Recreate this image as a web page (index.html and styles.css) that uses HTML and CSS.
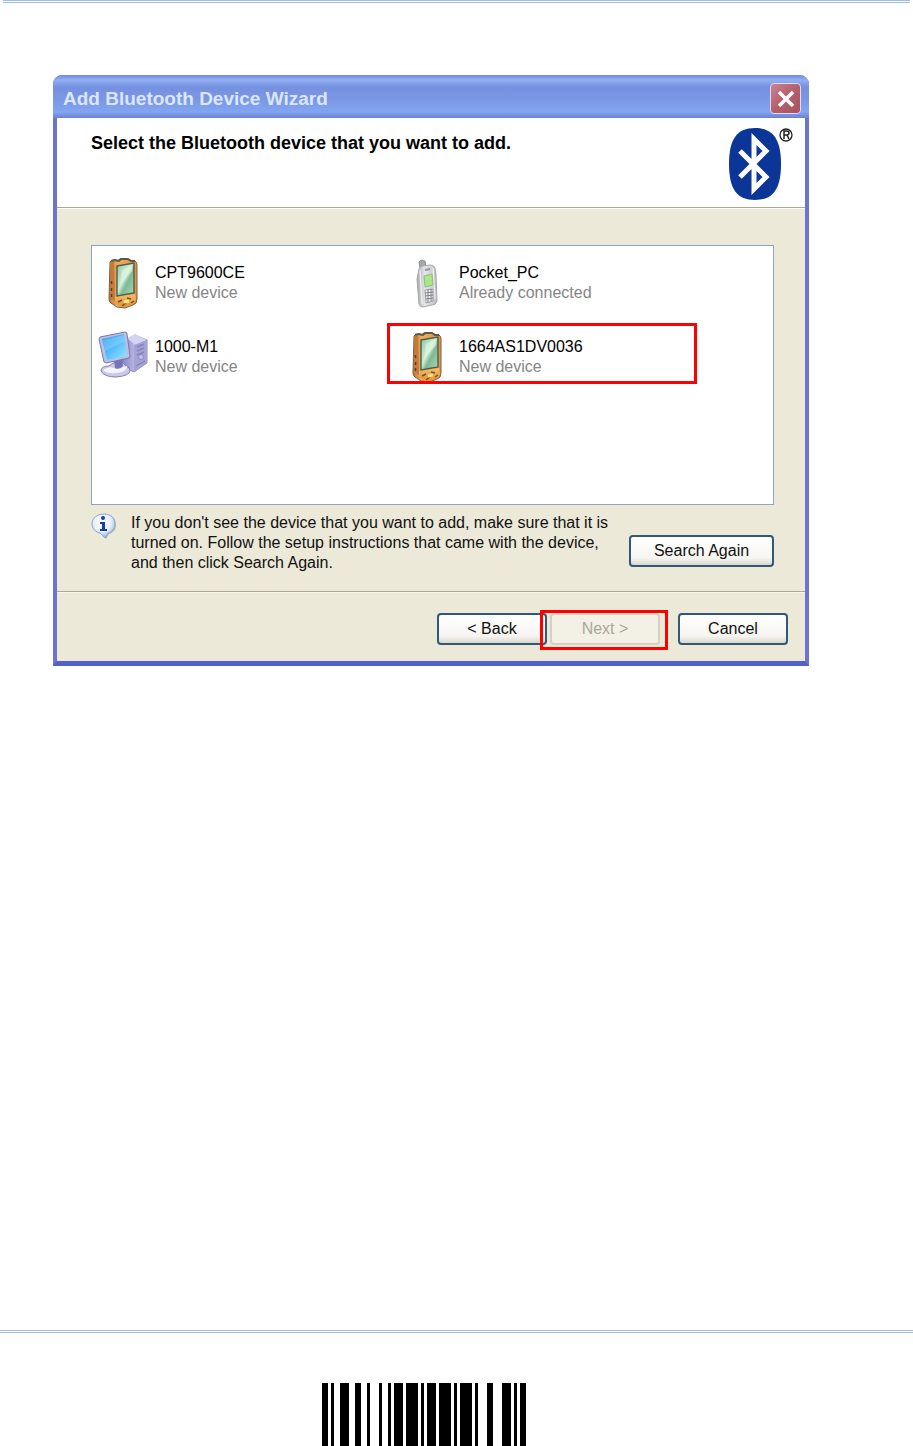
FILE: index.html
```html
<!DOCTYPE html>
<html lang="en">
<head>
<meta charset="utf-8">
<title>Add Bluetooth Device Wizard</title>
<link rel="stylesheet" href="styles.css">
</head>
<body>
<svg width="0" height="0" class="defs" aria-hidden="true">
  <defs>
    <linearGradient id="orange" x1="0" y1="0" x2="1" y2="0"><stop offset="0" stop-color="#bb7238"/><stop offset=".3" stop-color="#f0ac5c"/><stop offset="1" stop-color="#dc9248"/></linearGradient>
    <linearGradient id="orangeBase" x1="0" y1="0" x2="0" y2="1"><stop offset="0" stop-color="#f7bd68"/><stop offset="1" stop-color="#e09238"/></linearGradient>
    <linearGradient id="green" x1="0" y1="0" x2="1" y2="1"><stop offset="0" stop-color="#8fc4a4"/><stop offset=".45" stop-color="#cdeed4"/><stop offset=".6" stop-color="#7fb896"/><stop offset="1" stop-color="#a8dcb2"/></linearGradient>
    <linearGradient id="screen" x1="0" y1="0" x2="1" y2="1"><stop offset="0" stop-color="#2f9be8"/><stop offset=".5" stop-color="#55bdfa"/><stop offset="1" stop-color="#a0e6ff"/></linearGradient>
    <linearGradient id="tower" x1="0" y1="0" x2="1" y2="0"><stop offset="0" stop-color="#8583c4"/><stop offset=".5" stop-color="#b9b6e4"/><stop offset="1" stop-color="#8f8cc6"/></linearGradient>
    <linearGradient id="silver" x1="0" y1="0" x2="1" y2="0"><stop offset="0" stop-color="#a8a9ab"/><stop offset=".4" stop-color="#e6e7e8"/><stop offset="1" stop-color="#bdbec1"/></linearGradient>
    <radialGradient id="bubble" cx=".45" cy=".35" r=".65"><stop offset="0" stop-color="#fff"/><stop offset=".6" stop-color="#e6effb"/><stop offset="1" stop-color="#8fb0dc"/></radialGradient>
    <symbol id="pda" viewBox="0 0 52 58">
      <path d="M12 8Q13 6 16 6l3 1 3-2h8l4 2 3 0q2 1 2 4v34q0 5-4 6l-8 3-8-1-6-4q-2-1-2-4z" fill="url(#orange)" stroke="#80603f" stroke-width="1"/>
      <path d="M17 43l20-3 1 6q-1 4-5 5l-6 2-7-2-3-4z" fill="url(#orangeBase)"/>
      <path d="M12 8l4 0 1 39-3-2-1-3z" fill="#c57a38"/>
      <path d="M13 7l4-1 4 1 2-2h7l3 2h4" stroke="#5d5a43" stroke-width="2" fill="none"/>
      <path d="M19 12L36 9v30l-17 3z" fill="url(#green)" stroke="#49604b" stroke-width="1.4"/>
      <path d="M24 16l10-5v6L22 31z" fill="#e4f6e6" opacity=".6"/>
      <path d="M20 48l4-2M29 44l4 1M33 49l3-2M24 52l4-3" stroke="#7a4c22" stroke-width="1.500"/>
      <path d="M26 48l5-1" stroke="#ffe27d" stroke-width="3"/>
      <path d="M13.500 27v3m0 4v3m0 3v3" stroke="#504034" stroke-width="1.500"/>
    </symbol>
    <symbol id="computer" viewBox="0 0 52 58">
      <path d="M29 12l8-5 12 5v23l-13 9-12-5V12z" fill="url(#tower)" stroke="#8f8cbc" stroke-width="1"/>
      <path d="M29 10l8-4 12 6-12 5z" fill="#d5d3f1"/>
      <path d="M36 17v27l13-9V12z" fill="#a5a3d6"/>
      <path d="M39 19l7-3M39 23l7-3M39 27l7-3M38 38l9-5" stroke="#8683bb" stroke-width="1.4"/>
      <circle cx="43" cy="29" r="2.500" fill="#c8c5ed" stroke="#8784bb"/>
      <path d="M3 43q0-5 8-5l4-3 8-2 5 5q4 1 4 5-1 5-14 6Q6 49 3 43z" fill="#c9c9e7" stroke="#8481ab"/>
      <path d="M5 42q7-5 13-1l11-3q0 6-11 7-9 1-13-3z" fill="#f3f4ff"/>
      <path d="M16 31l8-2 1 9q-3 4-8 2z" fill="#7773bb"/>
      <path d="M2 9l25-5q2 0 2 2l3 22-1 2-23 5-2-1-5-23z" fill="#b8c0e4" stroke="#7679aa"/>
      <path d="M4 11l22-5 3 22-20 4z" fill="url(#screen)"/>
      <path d="M5 12l21-5 1 6-20 10z" fill="#fff" opacity=".18"/>
    </symbol>
    <symbol id="phone" viewBox="0 0 52 58">
      <path d="M18 14l-1-6 2-2 4 1 1 7z" fill="#a5a6a9" stroke="#8c8e91"/>
      <path d="M17 15q1-2 3-3l8-1q4 0 5 3l1 7 1 26q-1 4-5 4l-9 2q-3 0-4-3l-2-25z" fill="url(#silver)" stroke="#a6a8ab"/>
      <path d="M18 16l2 34M31 14l2 31" stroke="#fff" stroke-width="1.300" opacity=".7"/>
      <path d="M22 22l8-2 1 11-8 2z" fill="#a5e886" stroke="#94b989"/>
      <path d="M23 16l5-1" stroke="#96979a" stroke-width="2"/>
      <path d="M23 36l8-1v12l-7 2z" fill="#f0f1f2" stroke="#9d9fa2"/>
      <path d="M23 39l8-1m-8 4l8-1m-7 4l7-1M26 35v13m3-13v12" stroke="#7f8286" stroke-width="1"/>
    </symbol>
  </defs>
</svg>

<div class="page">
  <div class="rule rule-top"></div>

  <section class="dialog" aria-labelledby="title">
    <header class="titlebar">
      <h1 id="title" class="title">Add Bluetooth Device Wizard</h1>
      <button class="close" type="button" aria-label="Close">
        <svg viewBox="0 0 20 20" width="20" height="20"><path d="M3 3l14 14M17 3L3 17" stroke="#fff" stroke-width="3.500"/></svg>
      </button>
    </header>

    <div class="banner">
      <h2 class="heading">Select the Bluetooth device that you want to add.</h2>
      <svg class="logo" viewBox="0 0 66 74" width="66" height="74" role="img" aria-label="Bluetooth">
        <path d="M27 1C45 1 53 12 53 37S45 73 27 73 1 62 1 37 9 1 27 1z" fill="#0b3597"/>
        <path d="M12 24l26 26-12 12V12l12 12-26 26" fill="none" stroke="#fff" stroke-width="5"/>
        <circle cx="58" cy="8" r="6" fill="none" stroke="#222" stroke-width="1.300"/>
        <path d="M56 12V4h2.500q2.500 0 2.500 2t-2.500 2H56m3 0l2 4" fill="none" stroke="#222" stroke-width="1.500"/>
      </svg>
    </div>

    <div class="content">
      <ul class="devices">
        <li class="device"><svg class="device-icon"><use href="#pda"/></svg><div><div class="name">CPT9600CE</div><div class="state">New device</div></div></li>
        <li class="device"><svg class="device-icon"><use href="#phone"/></svg><div><div class="name">Pocket_PC</div><div class="state">Already connected</div></div></li>
        <li class="device"><svg class="device-icon"><use href="#computer"/></svg><div><div class="name">1000-M1</div><div class="state">New device</div></div></li>
        <li class="device marked"><svg class="device-icon"><use href="#pda"/></svg><div><div class="name">1664AS1DV0036</div><div class="state">New device</div></div></li>
      </ul>
      <div class="hint">
        <svg class="hint-icon" viewBox="0 0 26 28" width="26" height="28" aria-hidden="true">
          <path d="M14 2c7 0 11 4 11 10 0 5-3 8-7 9l-3 5-5-5C6 20 2 17 2 12 2 6 7 2 14 2z" fill="#a5a69d" opacity=".7"/>
          <path d="M13 1c7 0 11 4 11 10 0 5-3 8-7 9l-3 5-5-5C5 19 1 16 1 11 1 5 6 1 13 1z" fill="url(#bubble)" stroke="#8aa9d3"/>
          <circle cx="12" cy="5" r="2" fill="#173eac"/>
          <path d="M9 9h5v7h2v2H9v-2h2v-5H9z" fill="#173eac"/>
        </svg>
        <p class="hint-text">If you don't see the device that you want to add, make sure that it is turned on. Follow the setup instructions that came with the device, and then click Search Again.</p>
        <button class="button search" type="button">Search Again</button>
      </div>
    </div>

    <footer class="actions">
      <button class="button" type="button">&lt; Back</button>
      <div class="next"><button class="button" type="button" disabled>Next &gt;</button></div>
      <button class="button cancel" type="button">Cancel</button>
    </footer>
  </section>

  <div class="page-foot">
    <div class="rule"></div>
    <svg class="barcode" viewBox="0 0 68 21" width="204" height="63" preserveAspectRatio="none" role="img" aria-label="Barcode" shape-rendering="crispEdges">
      <path d="M0 0h2v21h-2zM3 0h1v21h-1zM6 0h3v21h-3zM11 0h2v21h-2zM15 0h1v21h-1zM19 0h1v21h-1zM22 0h1v21h-1zM24 0h3v21h-3zM28 0h4v21h-4zM33 0h1v21h-1zM35 0h3v21h-3zM39 0h4v21h-4zM44 0h1v21h-1zM46 0h4v21h-4zM51 0h1v21h-1zM55 0h2v21h-2zM60 0h3v21h-3zM64 0h1v21h-1zM66 0h2v21h-2z"/>
    </svg>
  </div>
</div>
</body>
</html>
```

FILE: styles.css
```css
* { box-sizing: border-box; }

body {
  margin: 0;
  background: #fff;
  color: #111;
  font: 16px/20px "Liberation Sans", Arial, sans-serif;
}

h1, h2, p, ul { margin: 0; padding: 0; }

.defs { position: absolute; }

.page {
  display: flex;
  flex-direction: column;
  min-height: 100vh;
}

.rule {
  height: 3px;
  border: solid #9dbfe4;
  border-width: 1px 0;
}

.rule-top { margin: 0 3px; }

.dialog {
  margin: 72px 104px 0 53px;
  border: solid #6b74d3;
  border-width: 0 4px 5px;
  border-bottom-color: #555fc9;
  border-radius: 9px 9px 0 0;
  background: #ece9d8;
}

.titlebar {
  display: flex;
  align-items: center;
  justify-content: space-between;
  height: 43px;
  margin: 0 -4px;
  padding: 4px 8px 0 10px;
  border-radius: 9px 9px 0 0;
  background: linear-gradient(#6e8ade, #93b0f5 5px, #7590df 12px, #7a97e4 24px, #82a5f1 37px, #6b80d4);
}

.title {
  color: #dbe6fc;
  font-size: 19px;
  line-height: 24px;
}

.close {
  display: grid;
  place-items: center;
  width: 31px;
  height: 31px;
  padding: 0;
  border: 1px solid #dcdcf5;
  border-radius: 4px;
  background: linear-gradient(135deg, #c98491, #b55f6b 50%, #a9525e);
}

.banner {
  display: flex;
  justify-content: space-between;
  height: 89px;
  padding: 9px 11px 0 34px;
  background: #fff;
}

.heading {
  padding-top: 6px;
  font-size: 18px;
  line-height: 20px;
  color: #000;
}

.content {
  padding: 37px 31px 18px 34px;
  border-top: 1px solid #aca899;
  box-shadow: inset 0 1px #fff;
}

.devices {
  display: grid;
  grid-template-columns: repeat(auto-fill, 304px);
  align-content: start;
  gap: 16px 0;
  min-height: 260px;
  padding: 8px 6px;
  border: 1px solid #8ba7b9;
  background: #fff;
  list-style: none;
}

.device {
  position: relative;
  display: flex;
  align-items: center;
  gap: 5px;
  height: 58px;
}

.device-icon {
  flex: none;
  width: 52px;
  height: 58px;
}

.name { color: #000; }

.state { color: #858585; }

.marked::after {
  content: "";
  position: absolute;
  inset: -5px 9px 2px -15px;
  border: 3px solid #f00;
}

.hint {
  display: flex;
  gap: 14px;
  margin-top: 8px;
}

.hint-icon { flex: none; }

.hint-text {
  flex: 1;
}

.button {
  width: 110px;
  height: 32px;
  padding: 0;
  border: 2px solid #315779;
  border-radius: 4px;
  background: linear-gradient(#fff, #f6f5f1 75%, #dad7cc);
  color: #111;
  font: inherit;
}

.button:disabled {
  border-color: #d5d1c0;
  background: #f3f1e6;
  color: #aaa89b;
}

.search {
  flex: none;
  align-self: flex-end;
  width: 145px;
  margin-bottom: 6px;
}

.actions {
  display: flex;
  justify-content: flex-end;
  gap: 3px;
  padding: 21px 17px 16px;
  border-top: 1px solid #aca899;
  box-shadow: inset 0 1px #f8f6ec;
}

.next { position: relative; }

.next::after {
  content: "";
  position: absolute;
  inset: -3px -8px -5px -10px;
  border: 3px solid #f00;
}

.cancel { margin-left: 15px; }

.page-foot { margin-top: auto; }

.barcode {
  display: block;
  margin: 50px auto 0 322px;
}
```
